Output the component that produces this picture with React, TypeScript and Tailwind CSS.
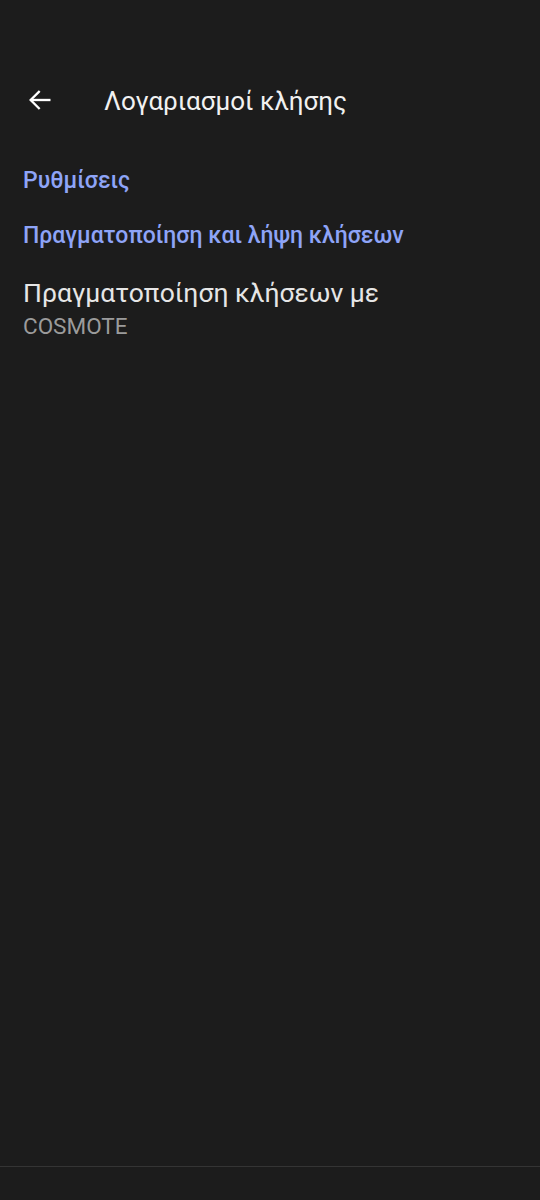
import React from 'react';

const font = { fontFamily: 'Roboto, "Noto Sans", sans-serif' };

const BackArrow = () => (
    <svg width="28" height="28" viewBox="0 0 24 24" fill="none" stroke="#ffffff" strokeWidth="2" strokeLinecap="square">
        <path d="M20 12H5" />
        <path d="M11 5l-7 7 7 7" />
    </svg>
);

const SectionHeader = ({ title }: { title: string }) => (
    <div className="px-[23px] text-[23px] font-medium text-[#8ea4f7] leading-[28px]">{title}</div>
);

const App: React.FC = () => {
    return (
        <div className="w-[540px] h-[1200px] bg-[#1c1c1c] flex flex-col" style={font}>
            <div className="flex items-center h-[72px] mt-[64px]">
                <div className="w-[80px] pl-[26px] flex items-center"><BackArrow /></div>
                <h1 className="ml-[24px] mt-[2px] text-[26px] text-[#f1f1f1] font-normal">Λογαριασμοί κλήσης</h1>
            </div>
            <div className="flex-1 flex flex-col pt-[31px]">
                <SectionHeader title="Ρυθμίσεις" />
                <div className="h-[27px]" />
                <SectionHeader title="Πραγματοποίηση και λήψη κλήσεων" />
                <div className="px-[23px] pt-[27px]">
                    <div className="text-[26.5px] text-[#e6e6e6] leading-[32px]">Πραγματοποίηση κλήσεων με</div>
                    <div className="mt-[4px] text-[22.5px] text-[#9b9b9b] leading-[26px]">COSMOTE</div>
                </div>
            </div>
            <div className="h-[34px] border-t border-[#343434]" />
        </div>
    );
};

export default App;
